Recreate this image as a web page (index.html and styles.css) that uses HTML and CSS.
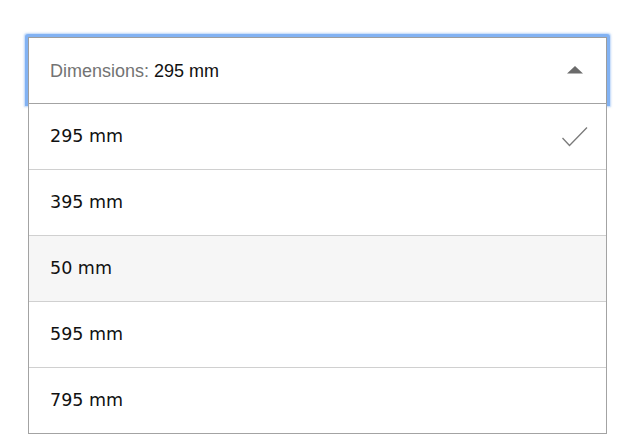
FILE: index.html
```html
<!DOCTYPE html>
<html>
<head>
<meta charset="utf-8">
<link rel="stylesheet" href="styles.css">
</head>
<body>
<div class="select">
  <div class="select-head">
    <span class="label">Dimensions:</span>&nbsp;<span class="value">295 mm</span>
    <svg class="caret" width="16" height="8" viewBox="0 0 16 8"><polygon points="0,7.5 8,0 16,7.5" fill="#6b6b6b"/></svg>
  </div>
  <ul class="options">
    <li class="option selected">295 mm
      <svg class="check" width="28" height="22" viewBox="0 0 28 22"><polyline points="1.5,12 8.5,19.5 26,1.5" fill="none" stroke="#7a7a7a" stroke-width="1.3"/></svg>
    </li>
    <li class="option">395 mm</li>
    <li class="option hover">50 mm</li>
    <li class="option">595 mm</li>
    <li class="option">795 mm</li>
  </ul>
</div>
</body>
</html>
```
FILE: styles.css
```css
html, body {
  margin: 0;
  padding: 0;
  background: #ffffff;
}
.select {
  margin: 37px 0 0 28px;
  width: 579px;
  position: relative;
}
.select-head {
  box-sizing: border-box;
  height: 66px;
  border: 1px solid #9d9d9d;
  border-bottom: none;
  border-radius: 1px 1px 0 0;
  box-shadow: 0 0 0 3px rgba(120, 172, 242, 0.85), 0 0 2px 4px rgba(120, 172, 242, 0.5);
  display: flex;
  align-items: center;
  padding: 2px 23px 0 21px;
  font-family: "Liberation Sans", Arial, sans-serif;
  font-size: 18px;
  background: #fff;
}
.label { color: #737373; }
.value { color: #111; }
.caret {
  margin-left: auto;
  margin-top: -3px;
}
.options {
  list-style: none;
  margin: 0;
  padding: 0;
  border: 1px solid #a3a3a3;
  background: #fff;
  position: relative;
  z-index: 1;
}
.option {
  box-sizing: border-box;
  height: 66px;
  border-bottom: 1px solid #d0d0d0;
  display: flex;
  align-items: center;
  padding: 0 17px 2px 21px;
  font-family: "DejaVu Sans", Verdana, sans-serif;
  font-size: 17.5px;
  color: #111;
}
.option:last-child {
  border-bottom: none;
  height: 65px;
}
.option.hover { background: #f6f6f6; }
.check { margin-left: auto; margin-top: 2px; }
```
